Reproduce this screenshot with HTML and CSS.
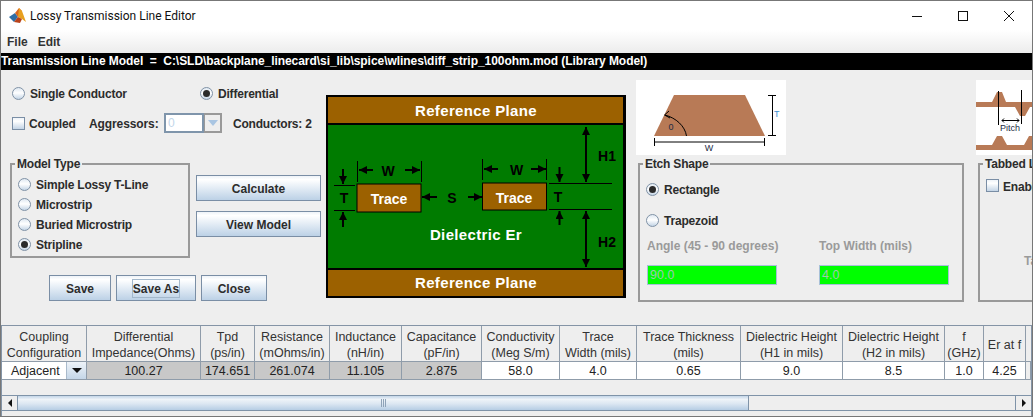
FILE: index.html
```html
<!DOCTYPE html>
<html lang="en">
<head>
<meta charset="utf-8">
<title>Lossy Transmission Line Editor</title>
<link rel="stylesheet" href="styles.css">
</head>
<body>
<div class="window">
  <header class="titlebar">
    <svg class="appicon" width="18" height="16" viewBox="0 0 18 16">
      <polygon points="0,9 6,5 9,9 5,14" fill="#2f6ea5"/>
      <polygon points="6,5 10,0 13,3 9,9" fill="#d9641e"/>
      <polygon points="10,0 13,3 17,14 13,11 9,9" fill="#e8a020"/>
      <polygon points="9,9 13,11 11,15 5,14" fill="#b8421a"/>
    </svg>
    <span class="title">Lossy Transmission Line Editor</span>
    <div class="controls">
      <span class="ctl"><svg width="10" height="10" viewBox="0 0 10 10"><path d="M0 5.5H10" stroke="#111" fill="none"/></svg></span>
      <span class="ctl"><svg width="10" height="10" viewBox="0 0 10 10"><rect x=".5" y=".5" width="9" height="9" stroke="#111" fill="none"/></svg></span>
      <span class="ctl"><svg width="10" height="10" viewBox="0 0 10 10"><path d="M0 0L10 10M10 0L0 10" stroke="#111" fill="none"/></svg></span>
    </div>
  </header>
  <nav class="menubar"><span class="menu">File</span><span class="menu">Edit</span></nav>
  <div class="modelbar">Transmission Line Model &nbsp;= &nbsp;C:\SLD\backplane_linecard\si_lib\spice\wlines\diff_strip_100ohm.mod (Library Model)</div>

  <main class="main">
    <section class="leftcol">
      <div class="row1">
        <label class="opt opt-single"><i class="radio"></i>Single Conductor</label>
        <label class="opt"><i class="radio on"></i>Differential</label>
      </div>
      <div class="row2">
        <label class="opt opt-coupled"><i class="check"></i>Coupled</label>
        <span class="aggr">Aggressors:</span>
        <span class="combo"><span class="combo-field">0</span><span class="combo-btn"><i class="tri tri-light"></i></span></span>
        <span class="cond">Conductors: 2</span>
      </div>
      <div class="row3">
        <div class="group group-model">
          <span class="legend">Model Type</span>
          <label class="opt opt-row"><i class="radio"></i>Simple Lossy T-Line</label>
          <label class="opt opt-row"><i class="radio"></i>Microstrip</label>
          <label class="opt opt-row"><i class="radio"></i>Buried Microstrip</label>
          <label class="opt opt-row"><i class="radio on"></i>Stripline</label>
        </div>
        <div class="actions">
          <button class="btn btn-wide">Calculate</button>
          <button class="btn btn-wide">View Model</button>
        </div>
      </div>
      <div class="row4">
        <button class="btn btn-save">Save</button>
        <button class="btn btn-saveas"><span class="focus">Save As</span></button>
        <button class="btn btn-close">Close</button>
      </div>
    </section>

    <svg class="diagram" width="300" height="203" viewBox="0 0 300 203">
      <defs>
        <marker id="ah" markerUnits="userSpaceOnUse" markerWidth="10" markerHeight="10" refX="8" refY="4" orient="auto-start-reverse">
          <path d="M0 0L8 4L0 8Z" fill="#000"/>
        </marker>
      </defs>
      <rect width="300" height="203" fill="#000"/>
      <rect x="2" y="2" width="295" height="26" fill="#9c6100"/>
      <rect x="2" y="30" width="295" height="143" fill="#007b00"/>
      <rect x="2" y="175" width="295" height="26" fill="#9c6100"/>
      <text class="d-w" x="150" y="21" text-anchor="middle">Reference Plane</text>
      <text class="d-w" x="150" y="193" text-anchor="middle">Reference Plane</text>
      <text class="d-w" x="150" y="145" text-anchor="middle">Dielectric Er</text>
      <rect x="31" y="89" width="64" height="28" fill="#9c6100" stroke="#000"/>
      <rect x="156.500" y="88" width="64" height="27" fill="#9c6100" stroke="#000"/>
      <text class="d-t" x="63" y="109" text-anchor="middle">Trace</text>
      <text class="d-t" x="188" y="108" text-anchor="middle">Trace</text>
      <g class="d-k" text-anchor="middle">
        <text x="62" y="81">W</text>
        <text x="190.500" y="80">W</text>
        <text x="18" y="108">T</text>
        <text x="232" y="107">T</text>
        <text x="126" y="108">S</text>
        <text x="281" y="66">H1</text>
        <text x="281" y="152">H2</text>
      </g>
      <g stroke="#000" stroke-width="1" fill="none">
        <path d="M31.500 66V87M95.500 66V87M156.500 64V85M220.500 64V85"/>
        <path d="M8 90.500H29M8 115.500H29M223 88.500H286M223 114.500H286"/>
      </g>
      <g stroke="#000" stroke-width="2" fill="none">
        <path d="M47 75H33" marker-end="url(#ah)"/>
        <path d="M79 75H94" marker-end="url(#ah)"/>
        <path d="M172 74H158" marker-end="url(#ah)"/>
        <path d="M205 74H220" marker-end="url(#ah)"/>
        <path d="M17 74V89" marker-end="url(#ah)"/>
        <path d="M17 132V117" marker-end="url(#ah)"/>
        <path d="M233.500 72V87" marker-end="url(#ah)"/>
        <path d="M233.500 130V116" marker-end="url(#ah)"/>
        <path d="M111 102H96" marker-end="url(#ah)"/>
        <path d="M142 102H156" marker-end="url(#ah)"/>
        <path d="M260 32V87" marker-start="url(#ah)" marker-end="url(#ah)"/>
        <path d="M260 116V172" marker-start="url(#ah)" marker-end="url(#ah)"/>
      </g>
    </svg>

    <section class="etchcol">
      <svg class="pic" width="150" height="75" viewBox="0 0 150 75">
        <rect width="150" height="75" fill="#fff"/>
        <polygon points="18,56 38,15 109,15 129,56" fill="#b87a56"/>
        <path d="M132 15.500H140M136.500 15.500V55.500M132 55.500H140M18.500 58V66M18.500 62H128.500M128.500 58V66" stroke="#000" fill="none"/>
        <path d="M50.500 56C49 46 40 38 29 35" stroke="#000" fill="none"/>
        <path d="M33 31L28.500 35L34 38" stroke="#000" fill="none"/>
        <text class="pic-t pic-blue" x="138" y="37">T</text>
        <text class="pic-t" x="73" y="71" text-anchor="middle">W</text>
        <text class="pic-t" x="35" y="50" text-anchor="middle">0</text>
      </svg>
      <div class="group group-etch">
        <span class="legend">Etch Shape</span>
        <label class="opt etch-first"><i class="radio on"></i>Rectangle</label>
        <label class="opt etch-second"><i class="radio"></i>Trapezoid</label>
        <div class="fields">
          <div class="field"><span class="dim">Angle (45 - 90 degrees)</span><span class="greenbox">90.0</span></div>
          <div class="field"><span class="dim">Top Width (mils)</span><span class="greenbox">4.0</span></div>
        </div>
      </div>
    </section>

    <section class="tabcol">
      <svg class="pic" width="57" height="75" viewBox="0 0 57 75">
        <rect width="57" height="75" fill="#fff"/>
        <path d="M0 22H16L21 12H26L30 22H57V27H54L49 36H44L39 27H0Z" fill="#b87a56"/>
        <path d="M0 70V65H16L21 56H26L31 65H48L53 56H57V70Z" fill="#b87a56"/>
        <path d="M22.500 11V45M45.500 10V44" stroke="#000" fill="none"/>
        <path d="M26 40.500H43M28 38.500L26 40.500L28 42.500M41 38.500L43 40.500L41 42.500" stroke="#000" fill="none"/>
        <text class="pic-t" x="34" y="51" text-anchor="middle">Pitch</text>
      </svg>
      <div class="group group-tab">
        <span class="legend">Tabbed Lines</span>
        <label class="opt"><i class="check"></i>Enable</label>
        <span class="dim tab-label">Tab</span>
      </div>
    </section>
  </main>

  <section class="pane">
    <div class="grid">
      <div class="h">Coupling<br>Configuration</div>
      <div class="h">Differential<br>Impedance(Ohms)</div>
      <div class="h">Tpd<br>(ps/in)</div>
      <div class="h">Resistance<br>(mOhms/in)</div>
      <div class="h">Inductance<br>(nH/in)</div>
      <div class="h">Capacitance<br>(pF/in)</div>
      <div class="h">Conductivity<br>(Meg S/m)</div>
      <div class="h">Trace<br>Width (mils)</div>
      <div class="h">Trace Thickness<br>(mils)</div>
      <div class="h">Dielectric Height<br>(H1 in mils)</div>
      <div class="h">Dielectric Height<br>(H2 in mils)</div>
      <div class="h">f<br>(GHz)</div>
      <div class="h">Er at f</div>
      <div class="h h-end"></div>

      <div class="c c-combo"><span>Adjacent</span><span class="cell-btn"><i class="tri tri-dark"></i></span></div>
      <div class="c c-ro">100.27</div>
      <div class="c c-ro">174.651</div>
      <div class="c c-ro">261.074</div>
      <div class="c c-ro">11.105</div>
      <div class="c c-ro">2.875</div>
      <div class="c">58.0</div>
      <div class="c">4.0</div>
      <div class="c">0.65</div>
      <div class="c">9.0</div>
      <div class="c">8.5</div>
      <div class="c">1.0</div>
      <div class="c">4.25</div>
      <div class="c c-end"></div>
    </div>
    <div class="scrollbar">
      <span class="sb-btn"><i class="arrow arrow-l"></i></span>
      <span class="thumb"><i class="grip"></i></span>
      <span class="track"></span>
      <span class="sb-btn sb-btn-r"><i class="arrow arrow-r"></i></span>
    </div>
  </section>
</div>
</body>
</html>
```

FILE: styles.css
```css
* { box-sizing: border-box; }
html, body { margin: 0; padding: 0; overflow: hidden; }
body { font: bold 12px "Liberation Sans", Arial, sans-serif; color: #2c2c2c; }

.window {
  width: 1033px; height: 417px;
  display: flex; flex-direction: column;
  background: #eeeeee;
  border: 1px solid #777;
  overflow: hidden;
}

/* title + menu */
.titlebar { height: 29px; flex: none; background: #fff; display: flex; align-items: center; padding-left: 8px; }
.appicon { flex: none; margin-top: 1px; }
.title { margin-left: 3px; font: 400 12px Roboto, sans-serif; color: #111; margin-top: 1px; }
.controls { margin-left: auto; display: flex; }
.ctl { width: 46px; height: 29px; display: flex; align-items: center; justify-content: center; }
.menubar { height: 23px; flex: none; display: flex; align-items: center; gap: 10px; padding: 0 0 0 6px; background: linear-gradient(#fff, #ececec); }
.menu { color: #333; }
.modelbar { height: 17px; flex: none; background: #000; color: #fff; line-height: 17px; white-space: nowrap; overflow: hidden; letter-spacing: -.05px; }

/* main area */
.main { height: 255px; flex: none; display: flex; }
.leftcol { width: 325px; flex: none; }
.opt { display: flex; align-items: center; gap: 5px; white-space: nowrap; padding-top: 2px; letter-spacing: -.2px; }
.radio { width: 13px; height: 13px; flex: none; margin-bottom: 2px; border-radius: 50%; border: 1px solid #8092a6; background: linear-gradient(#dfe8f1, #fff 45%, #c4d5e6); display: flex; align-items: center; justify-content: center; }
.radio.on::after { content: ""; width: 7px; height: 7px; border-radius: 50%; background: #2b2b2b; }
.check { width: 13px; height: 13px; flex: none; margin-bottom: 2px; border: 1px solid #7a8ea5; background: linear-gradient(#eef3f8, #fff 30%, #c4d5e6); }

.row1 { display: flex; margin-top: 15px; height: 16px; padding-left: 11px; }
.opt-single { width: 188px; }
.row2 { display: flex; align-items: center; margin-top: 12px; height: 20px; padding-left: 11px; }
.opt-coupled { width: 77px; gap: 4px; }
.aggr { width: 75px; padding-top: 2px; letter-spacing: -.1px; }
.combo { display: flex; width: 58px; height: 20px; }
.combo-field { width: 40px; border: 2px solid #7f95ab; background: #fff; color: #c2d6ea; font-weight: 400; padding-left: 2px; line-height: 16px; }
.combo-btn { width: 18px; border: 2px solid #999; border-left-width: 1px; display: flex; align-items: center; justify-content: center; }
.cond { margin-left: 11px; padding-top: 2px; letter-spacing: -.2px; }
.tri { display: block; width: 0; height: 0; border-left: 5px solid transparent; border-right: 5px solid transparent; }
.tri-light { border-top: 6px solid #a9c5e2; }
.tri-dark { border-top: 5px solid #111; }

.row3 { display: flex; margin-top: 30px; padding-left: 9px; }
.group { position: relative; border: 2px solid #999; }
.legend { position: absolute; top: -8px; left: 3px; padding: 0 2px; background: #eee; line-height: 14px; white-space: nowrap; letter-spacing: -.2px; }
.group-model { width: 180px; height: 95px; padding: 9px 0 0 6px; }
.opt-row { height: 20px; gap: 5px; }
.actions { display: flex; flex-direction: column; gap: 10px; margin-left: 6px; padding-top: 12px; }
.btn { height: 26px; padding: 2px 0 0; border: 1px solid #7a8ea5; font: bold 12px "Liberation Sans", Arial, sans-serif; color: #2c2c2c; background: linear-gradient(#eef3f8 0, #fff 15%, #e3ecf5 50%, #bcd1e6 100%); }
.btn-wide { width: 125px; }
.row4 { display: flex; gap: 5px; margin-top: 17px; padding-left: 48px; }
.btn-save { width: 62px; }
.btn-saveas { width: 80px; padding-top: 0; }
.btn-close { width: 66px; }
.focus { display: inline-block; border: 1px solid #a3b8cc; padding: 2px 0 1px; }

.diagram { flex: none; margin-top: 25px; }
.d-w { font: bold 15px "Liberation Sans", Arial, sans-serif; fill: #fff; letter-spacing: .35px; }
.d-t { font: bold 14px "Liberation Sans", Arial, sans-serif; fill: #fff; }
.d-k { font: bold 14px "Liberation Sans", Arial, sans-serif; fill: #000; }

.etchcol { width: 340px; flex: none; margin-left: 10px; padding-top: 10px; }
.pic { display: block; }
.group-etch { width: 326px; height: 139px; margin: 8px 0 0 2px; padding: 16px 0 0 6px; }
.etch-first { height: 16px; }
.etch-second { height: 16px; margin-top: 15px; }
.fields { display: flex; gap: 42px; margin: 11px 0 0 1px; }
.field { width: 130px; display: flex; flex-direction: column; }
.dim { color: #9a9a9a; line-height: 14px; white-space: nowrap; }
.greenbox { margin-top: 12px; height: 20px; background: #00ff00; border: 1px solid #a8c0d8; color: #9fc8b0; font-weight: 400; font-size: 12.5px; line-height: 19px; padding-left: 2px; }
.pic-t { font: 400 9px "Liberation Sans", Arial, sans-serif; fill: #1c2c44; }
.pic-blue { fill: #3f8fd0; }

.tabcol { flex: 1; min-width: 0; padding-top: 10px; overflow: hidden; }
.group-tab { width: 200px; height: 139px; margin: 8px 0 0 2px; padding: 14px 0 0 6px; }
.group-tab .opt { height: 13px; gap: 4px; }
.tab-label { display: block; margin: 62px 0 0 38px; }

/* table */
.pane { flex: 1; min-height: 0; border: 1px solid #8494a6; border-bottom: 0; }
.grid { display: grid; grid-template-columns: 85px 114px 54px 75px 72px 80px 78px 77px 104px 102px 102px 39px 42px 1fr; grid-template-rows: 36px 18px; font-size: 12.5px; }
.h { border-right: 1px solid #8f9caa; border-bottom: 1px solid #8f9caa; padding-top: 2px; font-weight: 400; line-height: 16px; color: #333; text-align: center; display: flex; align-items: center; justify-content: center; background: #eee; white-space: nowrap; }
.h-end, .c-end { border-right: 0; }
.c { border-right: 1px solid #8f9caa; border-bottom: 1px solid #8f9caa; font-weight: 400; color: #222; background: #fff; text-align: center; line-height: 19px; white-space: nowrap; }
.c-ro { background: #c8c8c8; }
.c-combo { display: flex; justify-content: space-between; padding-left: 9px; }
.cell-btn { width: 20px; display: flex; align-items: center; justify-content: center; background: linear-gradient(#eef3f8, #c4d6e8); border-left: 1px solid #a9bacb; }
.c-end { background: #eee; }

.scrollbar { display: flex; height: 16px; margin-top: 15px; border-top: 1px solid #7f93a8; border-bottom: 1px solid #7f93a8; }
.sb-btn { width: 15px; flex: none; display: flex; align-items: center; justify-content: center; background: #eee; }
.sb-btn-r { width: 16px; border-left: 1px solid #7f93a8; }
.arrow { display: block; width: 0; height: 0; border-top: 4px solid transparent; border-bottom: 4px solid transparent; }
.arrow-l { border-right: 4px solid #111; }
.arrow-r { border-left: 4px solid #111; }
.thumb { width: 732px; flex: none; display: flex; align-items: center; justify-content: center; border-left: 1px solid #7f93a8; border-right: 1px solid #7f93a8; background: linear-gradient(#c4d6e8 0, #eef3f8 25%, #dce7f2 55%, #b6cde4 100%); }
.grip { display: block; width: 5px; height: 8px; background: repeating-linear-gradient(90deg, #8fa3b8 0 1px, transparent 1px 2px); }
.track { flex: 1; background: #eee; }
```
